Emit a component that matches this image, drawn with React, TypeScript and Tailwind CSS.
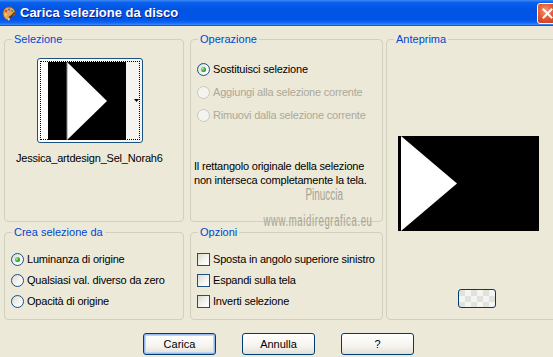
import React from "react";

const font = "font-['Liberation_Sans','Arial',sans-serif]";

function Group({
    title,
    className,
    children,
}: {
    title: string;
    className?: string;
    children?: React.ReactNode;
}) {
    return (
        <fieldset className={`min-w-0 rounded-[4px] border border-[#D0D0BF] ${className ?? ""}`}>
            <legend className="ml-[7px] px-[2px] text-[11px] leading-[13px] text-[#0046D5]">{title}</legend>
            {children}
        </fieldset>
    );
}

function Radio({ label, checked, disabled }: { label: string; checked?: boolean; disabled?: boolean }) {
    return (
        <div className="flex h-[13px] items-center gap-[3px] whitespace-nowrap">
            <span
                className={`flex h-[13px] w-[13px] shrink-0 items-center justify-center rounded-full border ${
                    disabled
                        ? "border-[#CAC8BB] bg-[#F4F3EE]"
                        : "border-[#1C5180] bg-[linear-gradient(135deg,#DCD9CD_0%,#F6F6F3_60%,#FFFFFF_100%)]"
                }`}
            >
                {checked && (
                    <span className="h-[5px] w-[5px] rounded-full bg-[radial-gradient(circle_at_35%_35%,#A6F0A6_0%,#21A121_60%,#0E7A0E_100%)]" />
                )}
            </span>
            <span className={`text-[11px] leading-[13px] tracking-[-0.2px] ${disabled ? "text-[#ACA899]" : "text-black"}`}>{label}</span>
        </div>
    );
}

function Check({ label }: { label: string }) {
    return (
        <div className="flex h-[13px] items-center gap-[3px] whitespace-nowrap">
            <span className="h-[13px] w-[13px] shrink-0 border border-[#1C5180] bg-[linear-gradient(135deg,#DCD9CD_0%,#F6F6F3_60%,#FFFFFF_100%)]" />
            <span className="text-[11px] leading-[13px] tracking-[-0.2px] text-black">{label}</span>
        </div>
    );
}

function XpButton({ label, focused }: { label: string; focused?: boolean }) {
    return (
        <button
            className={`flex h-[22px] w-full items-center justify-center rounded-[3px] border border-[#003C74] bg-[linear-gradient(to_bottom,#FFFFFF_0%,#F5F4EF_60%,#E3E0D4_100%)] text-[11px] text-black ${
                focused ? "shadow-[inset_0_0_0_1px_#98B8EA,inset_0_0_0_2px_#BCD4F6]" : ""
            }`}
        >
            {label}
        </button>
    );
}

function PaletteIcon() {
    return (
        <svg width="14" height="15" viewBox="0 0 14 15">
            <path d="M7 1C3 1 1 4 1 7.5 1 11 3.5 14 6.5 14c1.5 0 1.5-1.5.8-2.3-.6-.7 0-1.7 1-1.7H10c2 0 3-1.2 3-3C13 3.5 10.5 1 7 1z" fill="#E9A25A" stroke="#8A4A16" strokeWidth="0.8" />
            <circle cx="4" cy="5" r="1.2" fill="#E23B2E" />
            <circle cx="7" cy="3.6" r="1.1" fill="#2A7DE1" />
            <circle cx="10" cy="5" r="1.1" fill="#3AAA35" />
            <circle cx="3.8" cy="8.6" r="1.1" fill="#F6E04B" />
            <path d="M12.5 6.5 7 13" stroke="#5A3212" strokeWidth="1.4" />
            <path d="M7.6 12.2 6.2 14.2" stroke="#D9D9D9" strokeWidth="1.6" />
        </svg>
    );
}

export default function App() {
    return (
        <div className={`h-[357px] w-[553px] overflow-hidden bg-[#ECE9D8] ${font}`}>
            <div className="flex h-[26px] items-center bg-[linear-gradient(to_bottom,#3D8BF6_0%,#0A5FEC_10%,#0054E3_35%,#0055E8_75%,#1268F4_88%,#3784F8_94%,#0A3FC4_100%)] pl-[2px]">
                <PaletteIcon />
                <span className="ml-[4px] text-[13px] font-bold text-white [text-shadow:1px_1px_#0A1E8C]">
                    Carica selezione da disco
                </span>
                <div className="ml-auto mr-[-5px] flex h-[21px] w-[21px] items-center justify-center rounded-[3px] border border-white bg-[radial-gradient(circle_at_40%_35%,#F29A7A_0%,#E35A35_45%,#C4371D_100%)]">
                    <svg width="11" height="11" viewBox="0 0 11 11">
                        <path d="M1.5 1.5l8 8M9.5 1.5l-8 8" stroke="white" strokeWidth="2" strokeLinecap="square" />
                    </svg>
                </div>
            </div>

            <div className="relative flex pl-[4px] pt-[7px]">
                <div className="flex w-[180px] shrink-0 flex-col gap-[4px]">
                    <Group title="Selezione" className="h-[189px]">
                        <div className="ml-[32px] mt-[12px] flex h-[85px] w-[106px] items-center rounded-[3px] border border-[#1C5180] bg-[linear-gradient(to_right,#FFFFFF_0%,#F4F3EE_100%)] p-[2px]">
                            <div className="relative flex h-full w-full items-center border border-dotted border-black pl-[7px]">
                                <svg width="78" height="78" viewBox="0 0 78 78" className="shrink-0">
                                    <rect width="78" height="78" fill="#000" />
                                    <path d="M19 0 L59 39 L19 78 Z" fill="#fff" />
                                    <line x1="19" y1="0" x2="19" y2="78" stroke="#888" strokeWidth="1" />
                                </svg>
                                <svg width="5" height="3" viewBox="0 0 5 3" className="ml-[8px]">
                                    <path d="M0 0h5L2.5 3z" fill="#000" />
                                </svg>
                            </div>
                        </div>
                        <div className="ml-[11px] mt-[9px] text-[11px] leading-[13px] tracking-[-0.2px] text-black">Jessica_artdesign_Sel_Norah6</div>
                    </Group>
                    <Group title="Crea selezione da" className="h-[94px]">
                        <div className="ml-[6px] mt-[14px] flex flex-col gap-[8px]">
                            <Radio label="Luminanza di origine" checked />
                            <Radio label="Qualsiasi val. diverso da zero" />
                            <Radio label="Opacità di origine" />
                        </div>
                    </Group>
                </div>

                <div className="ml-[6px] flex w-[193px] shrink-0 flex-col gap-[4px]">
                    <Group title="Operazione" className="h-[189px]">
                        <div className="ml-[6px] mt-[17px] flex flex-col gap-[10px]">
                            <Radio label="Sostituisci selezione" checked />
                            <Radio label="Aggiungi alla selezione corrente" disabled />
                            <Radio label="Rimuovi dalla selezione corrente" disabled />
                        </div>
                        <p className="ml-[3px] mt-[37px] whitespace-nowrap text-[11px] leading-[14px] tracking-[-0.2px] text-black">
                            Il rettangolo originale della selezione
                            <br />
                            non interseca completamente la tela.
                        </p>
                    </Group>
                    <Group title="Opzioni" className="h-[94px]">
                        <div className="ml-[6px] mt-[14px] flex flex-col gap-[8px]">
                            <Check label="Sposta in angolo superiore sinistro" />
                            <Check label="Espandi sulla tela" />
                            <Check label="Inverti selezione" />
                        </div>
                    </Group>
                </div>

                <div className="ml-[3px] flex w-[180px] shrink-0 flex-col">
                    <Group title="Anteprima" className="h-[287px]">
                        <svg width="141" height="95" viewBox="0 0 141 95" className="ml-[11px] mt-[90px] block">
                            <rect width="141" height="95" fill="#000" />
                            <path d="M3 0 L59 47.5 L3 95 Z" fill="#fff" />
                        </svg>
                        <div className="ml-[71px] mt-[58px] h-[19px] w-[38px] rounded-[3px] border border-[#003C74] bg-[repeating-conic-gradient(#F4F4F0_0%_25%,#E2E2DC_0%_50%)] bg-[length:12px_12px]" />
                    </Group>
                </div>

                <div className="pointer-events-none absolute left-[265px] top-[161px] flex w-[106px] flex-col items-center text-[#A7A395]">
                    <span className="ml-[12px] h-[16px] origin-center scale-x-[0.62] text-[16px] leading-[16px]">Pinuccia</span>
                    <span className="mt-[10px] h-[16px] origin-center scale-x-[0.6] whitespace-nowrap text-[16px] leading-[16px] tracking-[1px]">www.maidiregrafica.eu</span>
                </div>
            </div>

            <div className="ml-[143px] mt-[13px] flex gap-[26px]">
                <div className="w-[73px]">
                    <XpButton label="Carica" focused />
                </div>
                <div className="w-[73px]">
                    <XpButton label="Annulla" />
                </div>
                <div className="w-[73px]">
                    <XpButton label="?" />
                </div>
            </div>
        </div>
    );
}
